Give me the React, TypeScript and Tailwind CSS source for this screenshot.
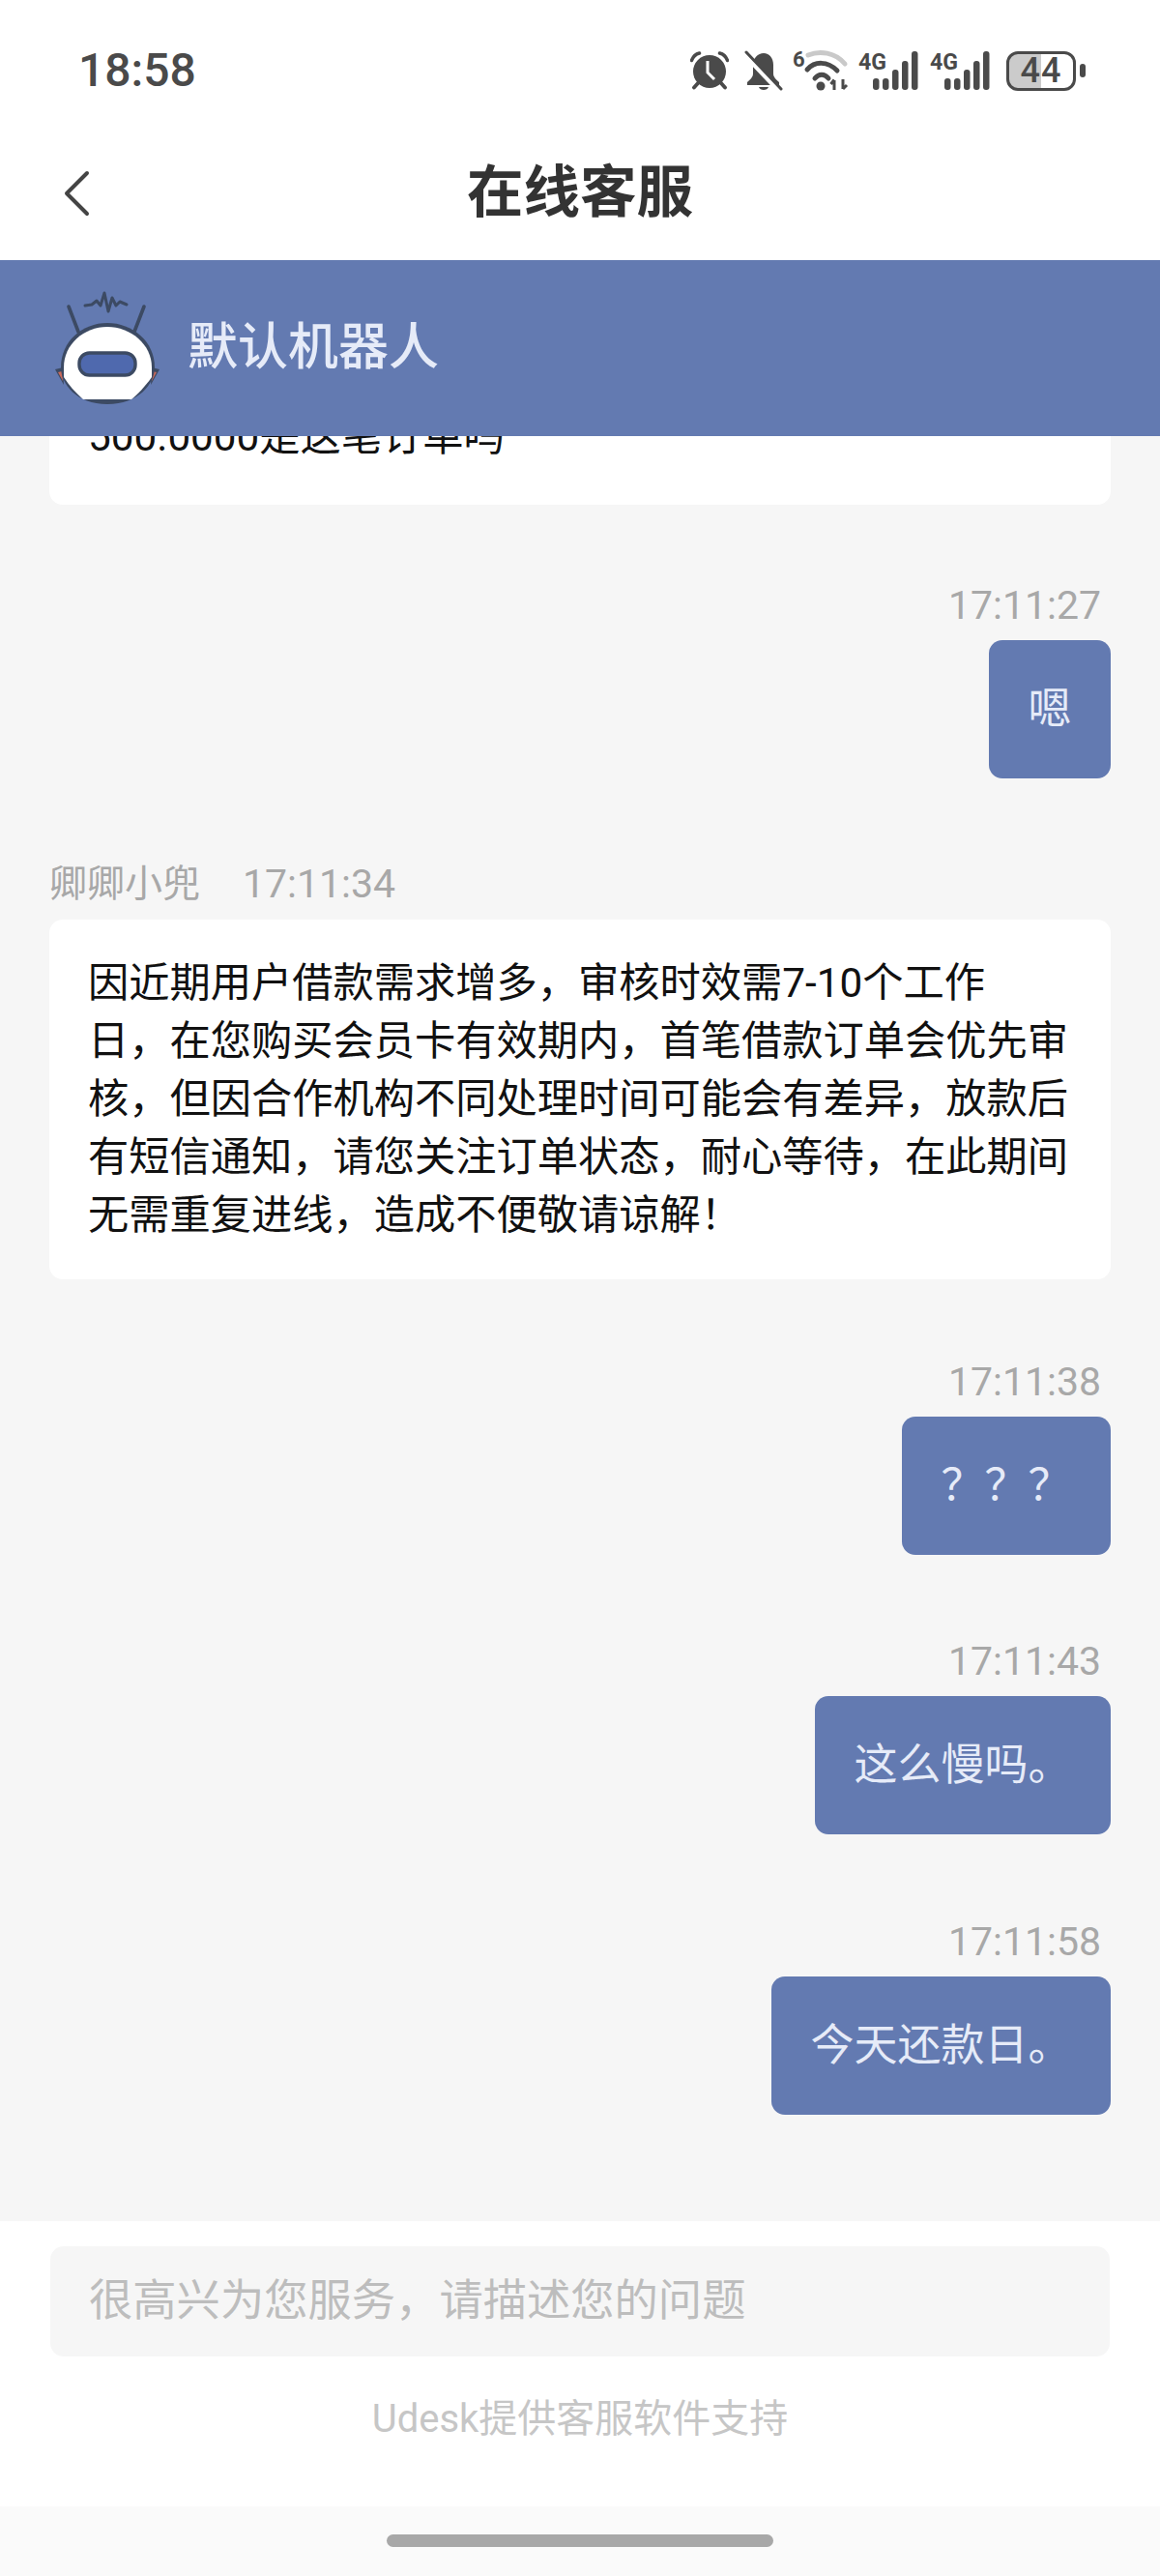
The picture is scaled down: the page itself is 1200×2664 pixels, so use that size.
const FONT = 'font-["Roboto","Noto_Sans_CJK_SC",sans-serif]';

const NOTICE = [
  '因近期用户借款需求增多，审核时效需7-10个工作',
  '日，在您购买会员卡有效期内，首笔借款订单会优先审',
  '核，但因合作机构不同处理时间可能会有差异，放款后',
  '有短信通知，请您关注订单状态，耐心等待，在此期间',
  '无需重复进线，造成不便敬请谅解！',
];

function AlarmIcon() {
  return (
    <svg width="40" height="40" viewBox="0 0 40 40" className="shrink-0">
      <circle cx="20" cy="21" r="17" fill="#4a4a4a" />
      <path d="M1.5 9.5 C3 5.5 5.5 3 9.5 2 M38.5 9.5 C37 5.5 34.5 3 30.5 2" fill="none" stroke="#4a4a4a" strokeWidth="3.5" strokeLinecap="round" />
      <path d="M8 33 L4 37.5 M32 33 L36 37.5" stroke="#4a4a4a" strokeWidth="3.8" strokeLinecap="round" />
      <path d="M18 10 L18 22 L25 29" fill="none" stroke="#fff" strokeWidth="3" />
    </svg>
  );
}

function BellOffIcon() {
  return (
    <svg width="40" height="42" viewBox="0 0 40 42" className="shrink-0">
      <path d="M20 3 C26 3 30 8 30 15 L30 24 C30 28 33 30 36 33 L36 36 L3 36 L3 33 C6 30 9 28 9 24 L9 15 C9 8 14 3 20 3 Z" fill="#4a4a4a" />
      <path d="M15 38 L25 38 C24 42 16 42 15 38 Z" fill="#4a4a4a" />
      <path d="M0 4 L35 41" stroke="#fff" strokeWidth="5" />
      <path d="M2 2 L38 40" stroke="#4a4a4a" strokeWidth="3" strokeLinecap="round" />
    </svg>
  );
}

function WifiIcon() {
  return (
    <svg width="58" height="50" viewBox="0 -4 58 50" className="shrink-0">
      <text x="0" y="17" fontSize="22" fontWeight="700" fill="#4a4a4a" fontFamily="Roboto, sans-serif">6</text>
      <path d="M16 5 C28 0 44 2 54 14" fill="none" stroke="#c9c9c9" strokeWidth="5" strokeLinecap="round" />
      <path d="M15 20 C23 11 36 11 46 21" fill="none" stroke="#4a4a4a" strokeWidth="5" strokeLinecap="round" />
      <path d="M23 29 C27 24 33 24 37 29" fill="none" stroke="#4a4a4a" strokeWidth="5" strokeLinecap="round" />
      <circle cx="29" cy="37" r="4.5" fill="#4a4a4a" />
      <path d="M43 41 L43 31 M39.5 35 L43 30.5 M52 30 L52 40 M52 40 L56 36" fill="none" stroke="#4a4a4a" strokeWidth="3" />
    </svg>
  );
}

function SignalIcon() {
  return (
    <svg width="62" height="50" viewBox="0 -4 62 50" className="shrink-0">
      <text x="0" y="20" fontSize="24" fontWeight="700" fill="#4a4a4a" fontFamily="Roboto, sans-serif" textLength="29" lengthAdjust="spacingAndGlyphs">4G</text>
      <rect x="15" y="29" width="6.5" height="12" rx="3" fill="#4a4a4a" />
      <rect x="25" y="29" width="6.5" height="12" rx="3" fill="#4a4a4a" />
      <rect x="35" y="20" width="6.5" height="21" rx="3" fill="#4a4a4a" />
      <rect x="45" y="11" width="6.5" height="30" rx="3" fill="#4a4a4a" />
      <rect x="55" y="1" width="6.5" height="40" rx="3" fill="#4a4a4a" />
    </svg>
  );
}

function Battery() {
  return (
    <div className="flex items-center shrink-0 gap-[4px]">
      <div className="w-[72px] h-[41px] rounded-[12px] border-[3.5px] border-[#4a4a4a] bg-[linear-gradient(90deg,#cbcbcb_50%,transparent_50%)] flex items-center justify-center text-[36px] leading-none font-medium text-[#4a4a4a] tracking-[1px]">
        44
      </div>
      <div className="w-[6px] h-[14px] rounded-full bg-[#4a4a4a]" />
    </div>
  );
}

function StatusBar() {
  return (
    <div className="h-[146px] flex items-center justify-between pl-[81px] pr-[77px]">
      <span className="text-[48px] leading-none font-medium text-[#4a4a4a]">18:58</span>
      <div className="flex items-center">
        <AlarmIcon />
        <div className="ml-[16px]"><BellOffIcon /></div>
        <div className="ml-[10px]"><WifiIcon /></div>
        <div className="ml-[10px]"><SignalIcon /></div>
        <div className="ml-[12px]"><SignalIcon /></div>
        <div className="ml-[17px]"><Battery /></div>
      </div>
    </div>
  );
}

function RobotAvatar() {
  return (
    <svg width="112" height="120" viewBox="25 30 112 120" className="ml-[55px] shrink-0">
      <path d="M41 47 L51 73 M119 47 L109 73" stroke="#3c4a63" strokeWidth="3.6" strokeLinecap="round" />
      <path d="M58 46 L65 45 L70 41 L74 46 L78 33 L82 52 L86 38 L90 46 L94 42 L101 45" fill="none" stroke="#3c4a63" strokeWidth="3" strokeLinejoin="round" strokeLinecap="round" />
      <path d="M27 112 L35 110 L36 128 Z M135 112 L127 110 L126 128 Z" fill="#3c4a63" />
      <path d="M30 115 L34 114 L35 124 Z M132 115 L128 114 L127 124 Z" fill="#c96a5c" />
      <path d="M33 110 C33 83 55 64 81 64 C107 64 130 83 130 110 C130 127 113 148 81 148 C49 148 33 127 33 110 Z" fill="#3c4a63" />
      <path d="M36 110 C36 86 57 68 81 68 C105 68 127 86 127 110 L127 120 C120 130 112 138 106 143 L56 143 C48 136 41 128 36 120 Z" fill="#fff" />
      <rect x="52" y="95" width="58" height="23" rx="10.5" fill="#4f69ae" stroke="#3c4a63" strokeWidth="3.4" />
    </svg>
  );
}

function Time({ children }: { children: string }) {
  return <span className="text-[41px] leading-[50px] text-[#a8a8a8]">{children}</span>;
}

function MyMessage({ time, text, className }: { time: string; text: string; className: string }) {
  return (
    <div className={`flex flex-col items-end ${className}`}>
      <div className="pr-[10px] mb-[11px] mt-[1px] flex"><Time>{time}</Time></div>
      <div className="h-[143px] px-[40.5px] flex items-center rounded-[14px] bg-[#637ab1] text-[45px] leading-[60px] text-[#e6ebf8]">
        {text}
      </div>
    </div>
  );
}

export default function App() {
  return (
    <div lang="zh-CN" className={`w-[1200px] h-[2664px] flex flex-col bg-white overflow-hidden ${FONT}`}>
      <header className="bg-white shrink-0">
        <StatusBar />
        <div className="h-[123px] pb-[16px] grid grid-cols-[1fr_auto_1fr] items-center">
          <svg width="30" height="48" viewBox="0 0 30 48" className="ml-[64px]">
            <path d="M26 3 L5 24 L26 45" fill="none" stroke="#444" strokeWidth="4" strokeLinecap="round" strokeLinejoin="round" />
          </svg>
          <h1 className="text-[58.5px] leading-none font-bold text-[#333]">在线客服</h1>
          <div />
        </div>
      </header>

      <div className="relative z-10 h-[182px] shrink-0 flex items-center bg-[#637ab1]">
        <RobotAvatar />
        <span className="ml-[27px] text-[52px] leading-none font-medium text-[#e6ebf8]">默认机器人</span>
      </div>

      <main className="flex-1 min-h-0 overflow-hidden bg-[#f6f6f6] px-[51px]">
        <div className="-mt-[29px] pb-[40px] px-[40px] bg-white rounded-b-[14px] text-[42.25px] leading-[60px] text-[#111] whitespace-nowrap">
          500.0000是这笔订单吗
        </div>

        <MyMessage className="mt-[78px]" time="17:11:27" text="嗯" />

        <div className="mt-[84px]">
          <div className="mt-[1px] mb-[12px] flex">
            <span className="text-[39px] leading-[50px] text-[#a8a8a8]">卿卿小兜</span>
            <div className="ml-[44px] flex"><Time>17:11:34</Time></div>
          </div>
          <div className="py-[36px] px-[40px] bg-white rounded-[14px] text-[42.25px] leading-[60px] text-[#111] whitespace-nowrap">
            {NOTICE.map((line) => (
              <div key={line}>{line}</div>
            ))}
          </div>
        </div>

        <MyMessage className="mt-[80px]" time="17:11:38" text="？？？" />
        <MyMessage className="mt-[84px]" time="17:11:43" text="这么慢吗。" />
        <MyMessage className="mt-[85px]" time="17:11:58" text="今天还款日。" />
      </main>

      <footer className="h-[367px] shrink-0 flex flex-col bg-white">
        <div className="mx-[52px] mt-[26px] h-[114px] shrink-0 flex items-center px-[40px] rounded-[14px] bg-[#f6f6f6] text-[45.3px] leading-none text-[#bdbdbd]">
          很高兴为您服务，请描述您的问题
        </div>
        <p className="mt-[40px] text-center text-[40px] leading-[50px] text-[#c6c6c6]">Udesk提供客服软件支持</p>
        <div className="mt-auto h-[72px] shrink-0 flex justify-center pt-[29px] bg-[#fafafa]">
          <div className="w-[400px] h-[13px] rounded-full bg-[#a8a8a8]" />
        </div>
      </footer>
    </div>
  );
}
